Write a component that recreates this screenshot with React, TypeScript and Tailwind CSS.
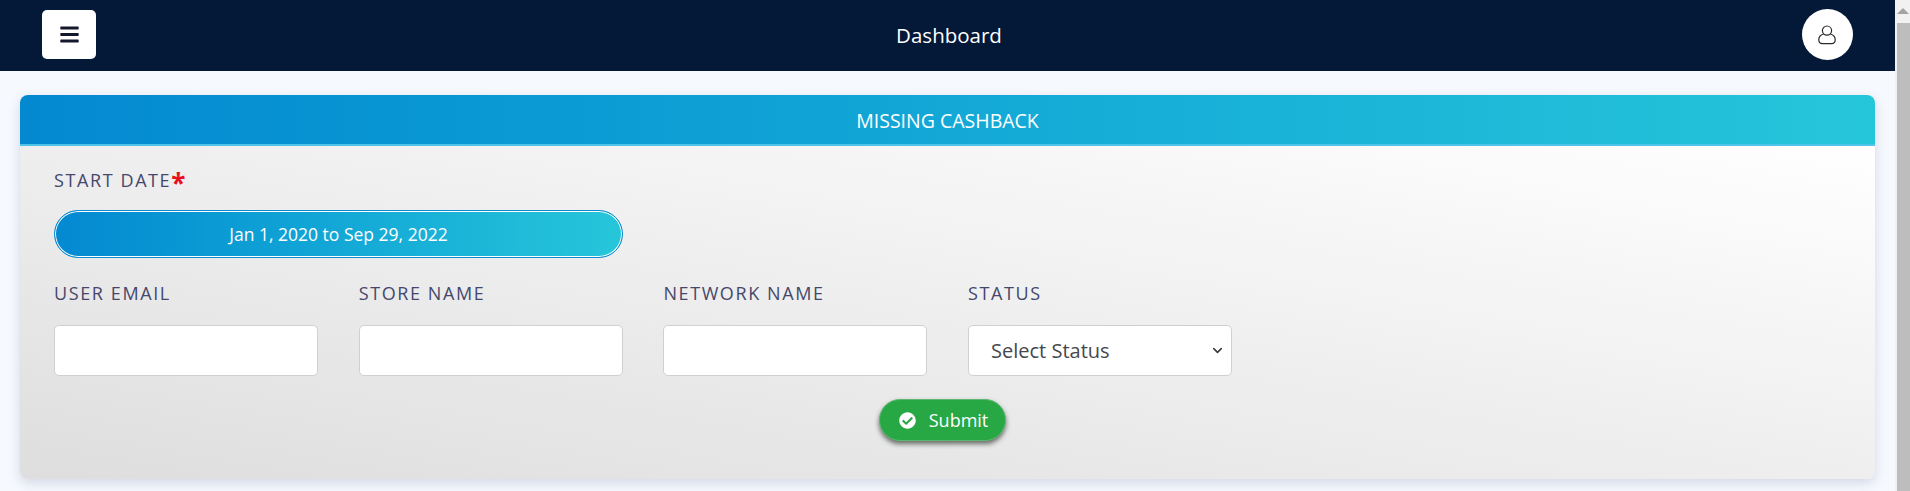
import { FaBars, FaCheckCircle } from "react-icons/fa";
import { ChevronDown } from "lucide-react";

const font = { fontFamily: '"Open Sans", "Noto Sans", sans-serif' };

function FieldLabel({ children }: { children: React.ReactNode }) {
  return (
    <label className="block h-[22px] text-[18px] leading-[22px] font-normal tracking-[1.6px] text-[#45476b] uppercase">
      {children}
    </label>
  );
}

function TextField({ label }: { label: string }) {
  return (
    <div className="w-[264px]">
      <FieldLabel>{label}</FieldLabel>
      <input
        type="text"
        className="mt-[21px] block h-[51px] w-full rounded-[5px] border border-[#d0d0d4] bg-white"
      />
    </div>
  );
}

function Scrollbar() {
  return (
    <div className="flex w-[15px] shrink-0 flex-col bg-[#f1f1f1]">
      <div className="flex h-[23px] items-start justify-center pt-[8px]">
        <div className="h-0 w-0 border-x-[6px] border-b-[6px] border-x-transparent border-b-[#a3a3a3]" />
      </div>
      <div className="ml-[2px] flex-1 bg-[#bdbdbd]" />
    </div>
  );
}

export default function App() {
  return (
    <div className="flex h-screen overflow-hidden bg-[#f6f9fe]" style={font}>
      <div className="min-w-0 flex-1">
        {/* Top bar */}
        <header className="flex h-[71px] items-center justify-between bg-[#041838] pr-[42px] pb-[2px] pl-[42px]">
          <button className="flex h-[49px] w-[54px] items-center justify-center rounded-[5px] bg-white text-[#14182c]">
            <FaBars className="text-[21px]" />
          </button>
          <h1 className="mt-[2px] text-[20.5px] text-white">Dashboard</h1>
          <button className="flex h-[51px] w-[51px] items-center justify-center rounded-full bg-white text-[#2a2a2a]">
            <svg width="20" height="20" viewBox="0 0 20 20" fill="none" stroke="currentColor" strokeWidth="1.2">
              <circle cx="10" cy="5.6" r="4.6" />
              <path d="M6.6 9C4.4 9.6 1.8 11.2 1.8 14.8c0 2.6 1.6 3.8 3.6 3.8h9.2c2 0 3.6-1.2 3.6-3.8 0-3.6-2.6-5.2-4.8-5.8" />
            </svg>
          </button>
        </header>

        {/* Card */}
        <main className="mt-[24px] mr-[20px] ml-[20px]">
          <section className="overflow-hidden rounded-[8px] shadow-[0_4px_12px_rgba(120,130,160,0.28)]">
            <div className="flex h-[51px] items-center justify-center border-b-2 border-[#4fc3e8] bg-linear-to-r from-[#0489d1] to-[#26c6da] pt-[2px] text-[19.5px] text-white">
              MISSING CASHBACK
            </div>
            <div className="h-[333px] bg-linear-to-tr from-[#dedede] to-white px-[34px] pt-[23px]">
              <FieldLabel>
                Start Date<span className="align-[-6px] text-[26px] leading-[0] font-bold text-[#e8101a]">*</span>
              </FieldLabel>
              <button className="mt-[19px] block h-[48px] w-[569px] rounded-full border border-[#0a8ad0] bg-linear-to-r from-[#0489d1] to-[#26c6da] text-[17.5px] text-white shadow-[inset_0_0_0_1px_#fff]">
                Jan 1, 2020 to Sep 29, 2022
              </button>
              <div className="mt-[24px] flex gap-[40.7px]">
                <TextField label="User Email" />
                <TextField label="Store Name" />
                <TextField label="Network Name" />
                <div className="w-[264px]">
                  <FieldLabel>Status</FieldLabel>
                  <div className="relative mt-[21px]">
                    <select className="block h-[51px] w-full appearance-none rounded-[5px] border border-[#d0d0d4] bg-white pl-[22px] text-[20px] text-[#45484c]">
                      <option>Select Status</option>
                    </select>
                    <ChevronDown
                      className="absolute top-[18px] right-[7px] h-[15px] w-[15px] text-[#343a40]"
                      strokeWidth={2.5}
                    />
                  </div>
                </div>
              </div>
              <div className="mt-[23px] ml-[825px]">
                <button className="flex h-[42px] w-[127px] items-center justify-center gap-[13px] rounded-full border border-[#5cb870] bg-[#28a745] pl-[2px] text-[18px] text-white shadow-[0_3px_5px_rgba(30,40,30,0.65)]">
                  <FaCheckCircle className="text-[17px]" />
                  Submit
                </button>
              </div>
            </div>
          </section>
        </main>
      </div>
      <Scrollbar />
    </div>
  );
}
